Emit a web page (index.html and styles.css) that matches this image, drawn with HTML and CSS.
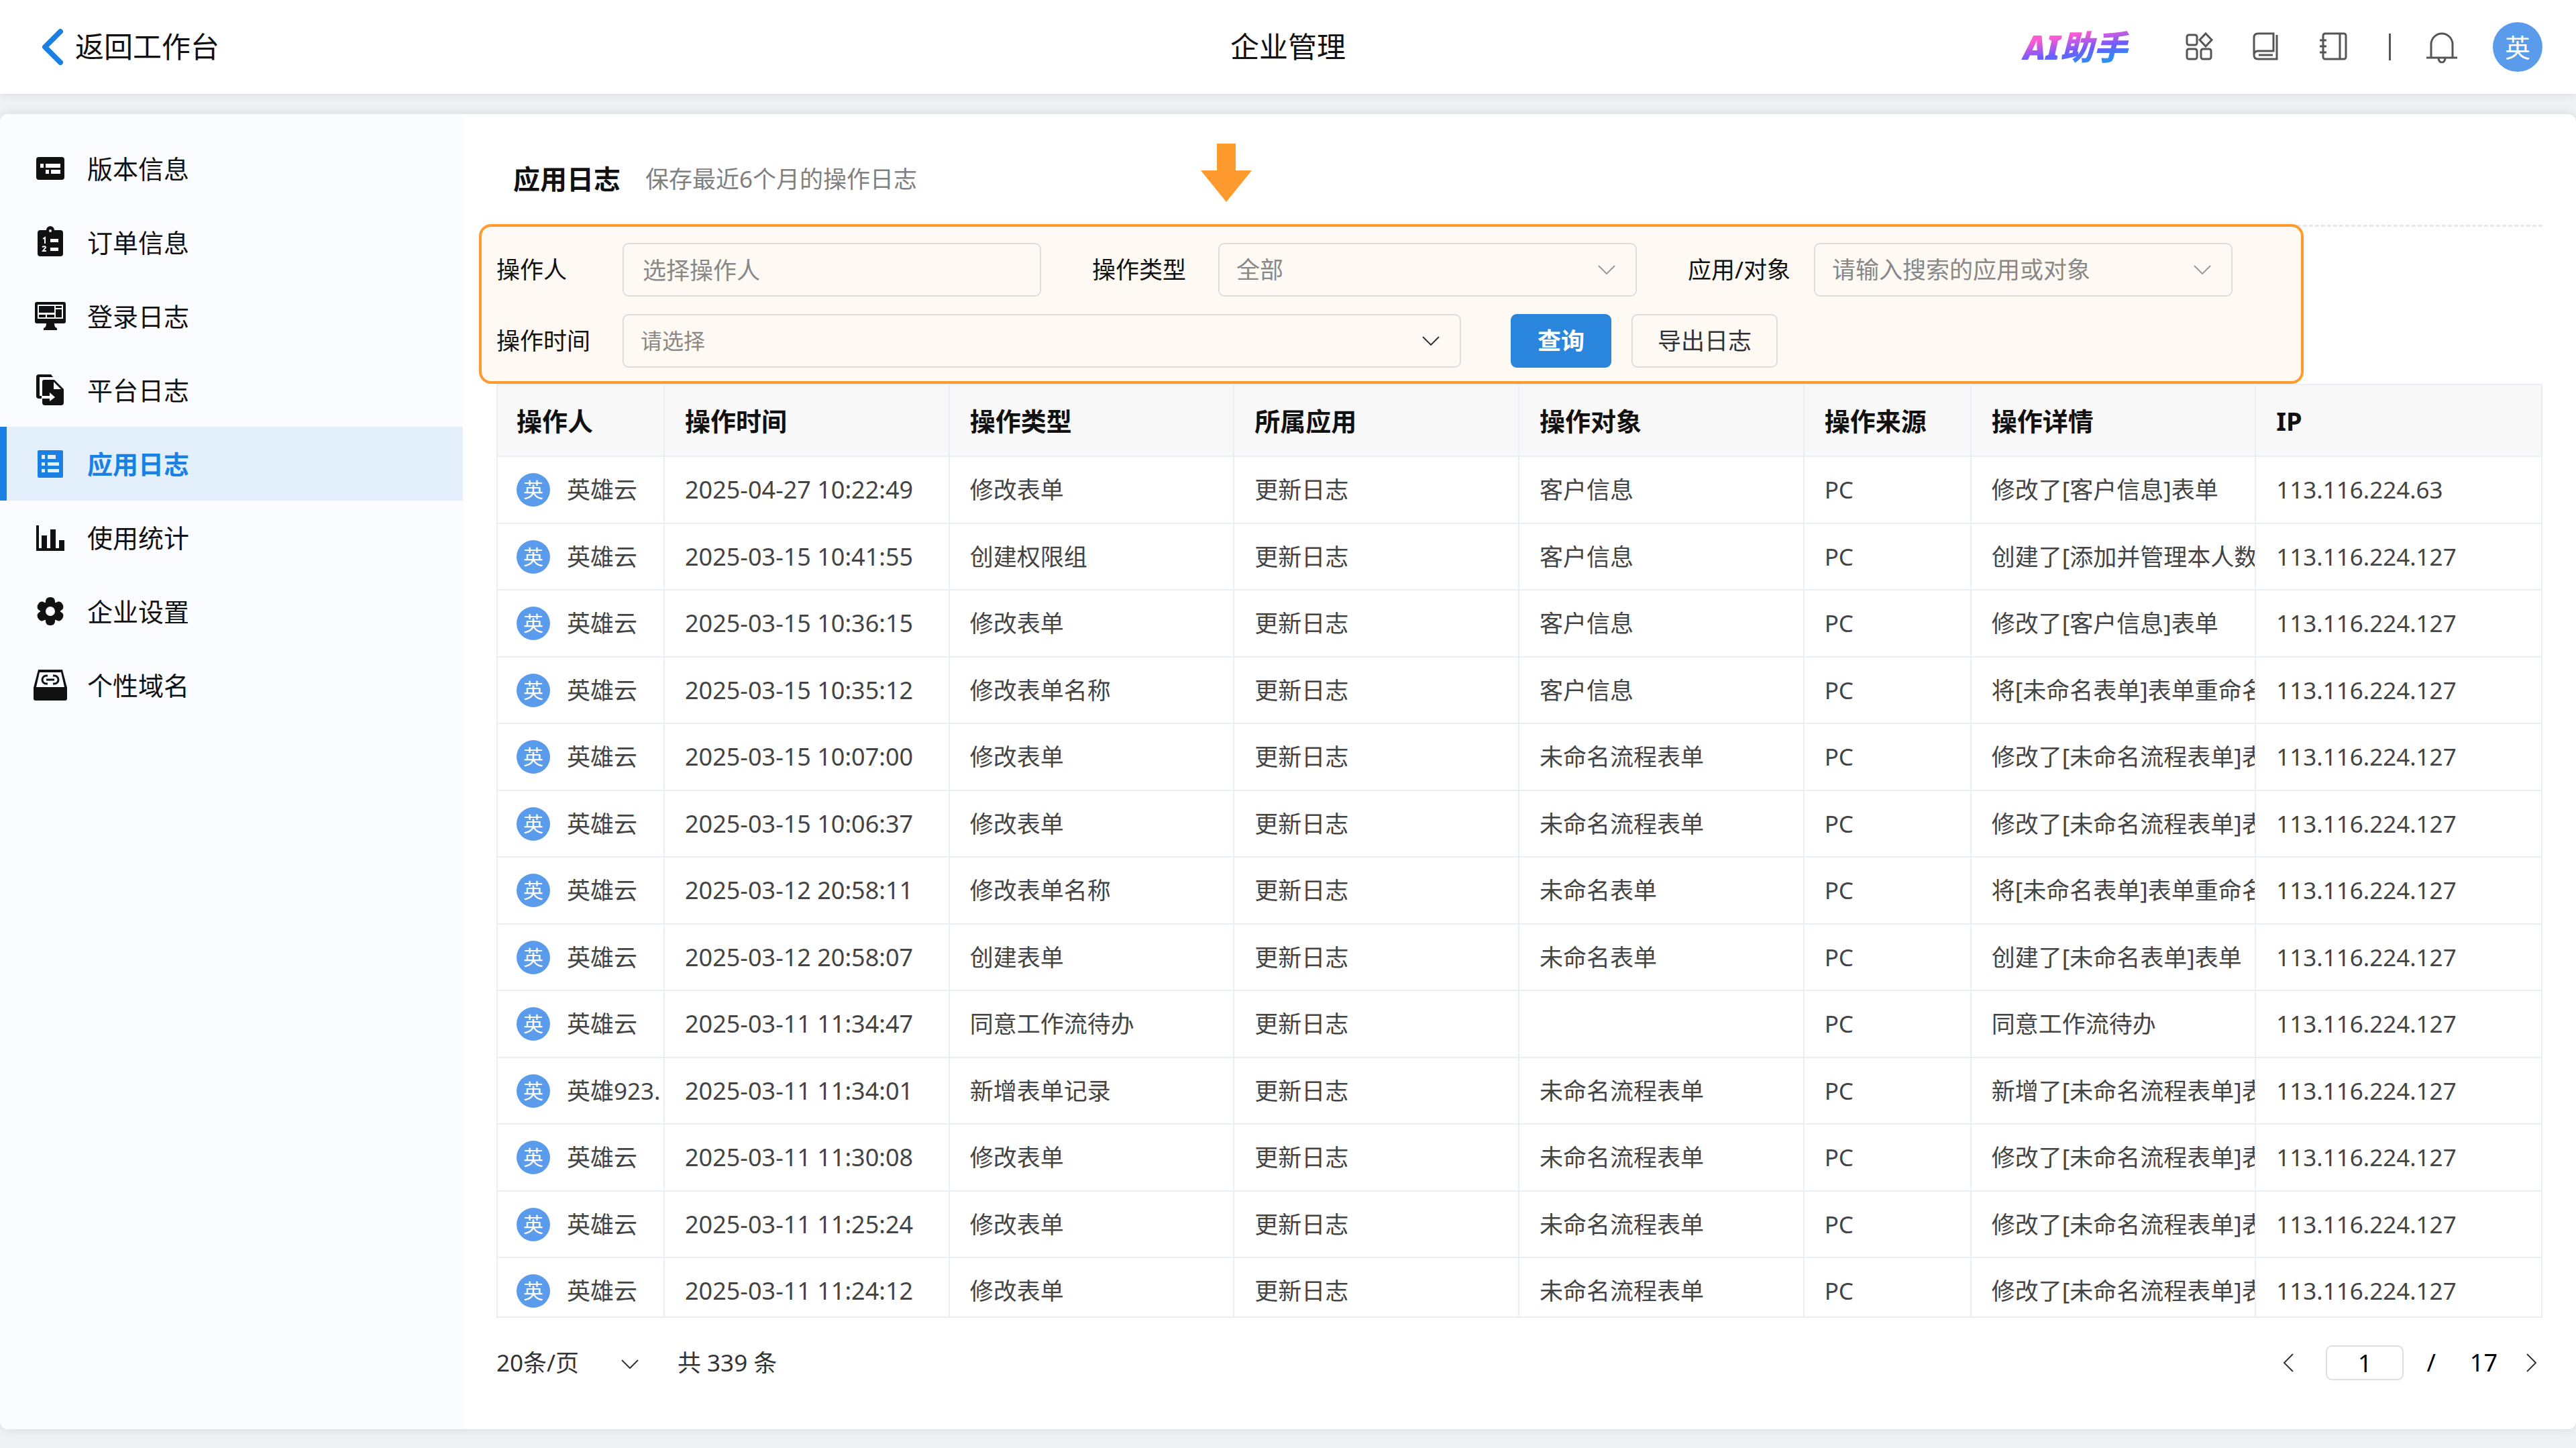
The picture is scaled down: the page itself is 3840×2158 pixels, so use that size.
FILE: index.html
```html
<!DOCTYPE html>
<html lang="zh-CN">
<head>
    <meta charset="UTF-8">
    <meta name="viewport" content="width=device-width, initial-scale=1.0">
    <title>企业管理 - 应用日志</title>
    <link rel="stylesheet" href="styles.css">
</head>
<body>

    <!-- 顶部导航 -->
    <header class="topbar">
        <a href="#" class="back">
            <svg width="32" height="54" viewBox="0 0 32 54"><path d="M28 4L5 27l23 23" fill="none" stroke="#1b80e4" stroke-width="8" stroke-linecap="round" stroke-linejoin="round"/></svg>
            返回工作台
        </a>
        <h1>企业管理</h1>
        <div class="tools">
            <a href="#" class="ai">AI助手</a>
            <button type="button" class="icon-btn" aria-label="应用">
                <svg viewBox="0 0 48 48"><rect x="5" y="6" width="15" height="15" rx="3"/><path d="M33 4l9 9.500-9 9.500-9-9.500z"/><rect x="5" y="27" width="15" height="15" rx="3"/><rect x="26" y="27" width="15" height="15" rx="3"/></svg>
            </button>
            <button type="button" class="icon-btn" aria-label="文档">
                <svg viewBox="0 0 48 48"><path d="M5 37V10q0-6 6-6h23v26H11q-6 0-6 6t6 6h28V6"/><path d="M12 36h21"/></svg>
            </button>
            <button type="button" class="icon-btn last" aria-label="通讯录">
                <svg viewBox="0 0 48 48"><rect x="8" y="4" width="34" height="38" rx="3"/><path d="M33 4v38M3 14h10M3 23h10M3 32h10"/></svg>
            </button>
            <span class="divider"></span>
            <button type="button" class="icon-btn" aria-label="消息">
                <svg viewBox="0 0 48 48"><path d="M1 40h46M8 40V20a16 16 0 0 1 32 0v20M19 41q1 6 5 6t5-6"/></svg>
            </button>
            <span class="avatar avatar-lg">英</span>
        </div>
    </header>

    <div class="panel">
        <!-- 左侧菜单 -->
        <nav class="sidebar">
            <a href="#">
                <svg viewBox="0 0 50 50"><rect x="4" y="8" width="42" height="34" rx="4"/><path class="cut" d="M10 18h5v6h-5zM18 18h22v6H18zM18 27h5v6h-5zM26 27h14v6H26z"/></svg>
                版本信息
            </a>
            <a href="#">
                <svg viewBox="0 0 50 50"><path d="M10 7h9a6 6 0 0 1 12 0h9q4 0 4 4v31q0 4-4 4H10q-4 0-4-4V11q0-4 4-4z"/><circle class="cut" cx="25" cy="8" r="2"/><path class="cut" d="M25 20h12v5H25zM25 33h12v5H25z"/><path class="cut-line" d="M14 20l3-2v9M13 32q5-2 5 1l-4 5h5"/></svg>
                订单信息
            </a>
            <a href="#">
                <svg viewBox="0 0 50 50"><path d="M5 4h40q3 0 3 3v26q0 3-3 3H31q0 6 4 7v3H15v-3q4-1 4-7H5q-3 0-3-3V7q0-3 3-3z"/><path class="cut" d="M6 8h38v21H6z"/><path d="M8 10h23v10H8zM33 10h9v3h-9zM33 15h9v12h-9zM8 23h10v4H8zM20 23h11v4H20z"/></svg>
                登录日志
            </a>
            <a href="#">
                <svg viewBox="0 0 50 50"><path d="M8 2h18l3 4H9v28h4v4H8q-4 0-4-4V6q0-4 4-4z"/><path d="M16 10h15l14 14v20q0 4-4 4H17q-4 0-4-4V13q0-3 3-3z"/><path class="cut" d="M30 13v11h11zM12 34h12v-5l8 7-8 6v-4H12z"/></svg>
                平台日志
            </a>
            <a href="#" class="active">
                <svg viewBox="0 0 50 50"><rect x="6" y="5" width="38" height="41" rx="2"/><path class="cut" d="M12 12h5v6h-5zM21 12h12v6H21zM12 23h5v5h-5zM21 23h17v5H21zM12 33h5v5h-5zM21 33h17v5H21z"/></svg>
                应用日志
            </a>
            <a href="#">
                <svg viewBox="0 0 50 50"><path d="M4 7h4v34h4V22h8v19h5V13h8v28h5V29h8v16H4z"/></svg>
                使用统计
            </a>
            <a href="#">
                <svg viewBox="0 0 50 50"><circle cx="25" cy="25" r="15"/><rect x="18" y="4" width="14" height="42" rx="6"/><rect x="18" y="4" width="14" height="42" rx="6" transform="rotate(60 25 25)"/><rect x="18" y="4" width="14" height="42" rx="6" transform="rotate(120 25 25)"/><circle class="cut" cx="25" cy="25" r="7"/></svg>
                企业设置
            </a>
            <a href="#">
                <svg viewBox="0 0 50 50"><path d="M7 2h36l7 27v16q0 3-3 3H3q-3 0-3-3V29z"/><path class="cut" d="M9 6h32l5 22H4z"/><path class="ring" d="M21 11h-2a6 6 0 0 0 0 12h2M29 11h2a6 6 0 0 1 0 12h-2M19 17h12"/></svg>
                个性域名
            </a>
        </nav>

        <main class="content">
            <div class="page-head">
                <h2>应用日志</h2>
                <p>保存最近6个月的操作日志</p>
                <svg class="arrow" width="76" height="87" viewBox="0 0 76 87"><path d="M24 0h28v40h24L38 87 0 40h24z" fill="#ff9a2e"/></svg>
            </div>

            <!-- 筛选条件 -->
            <form class="filter">
                <div class="field">
                    <label for="operator">操作人</label>
                    <input type="text" id="operator" placeholder="选择操作人">
                </div>
                <div class="field">
                    <label for="op-type">操作类型</label>
                    <div class="select">
                        <select id="op-type"><option>全部</option></select>
                        <svg viewBox="0 0 26 14"><path d="M1 1l12 12L25 1"/></svg>
                    </div>
                </div>
                <div class="field">
                    <label for="op-app">应用/对象</label>
                    <div class="select">
                        <select id="op-app"><option>请输入搜索的应用或对象</option></select>
                        <svg viewBox="0 0 26 14"><path d="M1 1l12 12L25 1"/></svg>
                    </div>
                </div>
                <div class="filter-row">
                    <div class="field time">
                        <label for="op-time">操作时间</label>
                        <div class="select dark">
                            <select id="op-time"><option>请选择</option></select>
                            <svg viewBox="0 0 26 14"><path d="M1 1l12 12L25 1"/></svg>
                        </div>
                    </div>
                    <button type="button" class="btn primary">查询</button>
                    <button type="button" class="btn">导出日志</button>
                </div>
            </form>

            <!-- 日志列表 -->
            <div class="table-wrap">
                <table>
                    <thead>
                        <tr><th class="narrow">操作人</th><th>操作时间</th><th>操作类型</th><th>所属应用</th><th>操作对象</th><th class="narrow">操作来源</th><th>操作详情</th><th>IP</th></tr>
                    </thead>
                    <tbody>
                        <tr><td><div class="user"><span class="avatar">英</span>英雄云</div></td><td class="date">2025-04-27 10:22:49</td><td>修改表单</td><td>更新日志</td><td>客户信息</td><td>PC</td><td>修改了[客户信息]表单</td><td>113.116.224.63</td></tr>
                        <tr><td><div class="user"><span class="avatar">英</span>英雄云</div></td><td class="date">2025-03-15 10:41:55</td><td>创建权限组</td><td>更新日志</td><td>客户信息</td><td>PC</td><td>创建了[添加并管理本人数据]</td><td>113.116.224.127</td></tr>
                        <tr><td><div class="user"><span class="avatar">英</span>英雄云</div></td><td class="date">2025-03-15 10:36:15</td><td>修改表单</td><td>更新日志</td><td>客户信息</td><td>PC</td><td>修改了[客户信息]表单</td><td>113.116.224.127</td></tr>
                        <tr><td><div class="user"><span class="avatar">英</span>英雄云</div></td><td class="date">2025-03-15 10:35:12</td><td>修改表单名称</td><td>更新日志</td><td>客户信息</td><td>PC</td><td>将[未命名表单]表单重命名为</td><td>113.116.224.127</td></tr>
                        <tr><td><div class="user"><span class="avatar">英</span>英雄云</div></td><td class="date">2025-03-15 10:07:00</td><td>修改表单</td><td>更新日志</td><td>未命名流程表单</td><td>PC</td><td>修改了[未命名流程表单]表单</td><td>113.116.224.127</td></tr>
                        <tr><td><div class="user"><span class="avatar">英</span>英雄云</div></td><td class="date">2025-03-15 10:06:37</td><td>修改表单</td><td>更新日志</td><td>未命名流程表单</td><td>PC</td><td>修改了[未命名流程表单]表单</td><td>113.116.224.127</td></tr>
                        <tr><td><div class="user"><span class="avatar">英</span>英雄云</div></td><td class="date">2025-03-12 20:58:11</td><td>修改表单名称</td><td>更新日志</td><td>未命名表单</td><td>PC</td><td>将[未命名表单]表单重命名为</td><td>113.116.224.127</td></tr>
                        <tr><td><div class="user"><span class="avatar">英</span>英雄云</div></td><td class="date">2025-03-12 20:58:07</td><td>创建表单</td><td>更新日志</td><td>未命名表单</td><td>PC</td><td>创建了[未命名表单]表单</td><td>113.116.224.127</td></tr>
                        <tr><td><div class="user"><span class="avatar">英</span>英雄云</div></td><td class="date">2025-03-11 11:34:47</td><td>同意工作流待办</td><td>更新日志</td><td></td><td>PC</td><td>同意工作流待办</td><td>113.116.224.127</td></tr>
                        <tr><td><div class="user"><span class="avatar">英</span>英雄923.</div></td><td class="date">2025-03-11 11:34:01</td><td>新增表单记录</td><td>更新日志</td><td>未命名流程表单</td><td>PC</td><td>新增了[未命名流程表单]表单</td><td>113.116.224.127</td></tr>
                        <tr><td><div class="user"><span class="avatar">英</span>英雄云</div></td><td class="date">2025-03-11 11:30:08</td><td>修改表单</td><td>更新日志</td><td>未命名流程表单</td><td>PC</td><td>修改了[未命名流程表单]表单</td><td>113.116.224.127</td></tr>
                        <tr><td><div class="user"><span class="avatar">英</span>英雄云</div></td><td class="date">2025-03-11 11:25:24</td><td>修改表单</td><td>更新日志</td><td>未命名流程表单</td><td>PC</td><td>修改了[未命名流程表单]表单</td><td>113.116.224.127</td></tr>
                        <tr><td><div class="user"><span class="avatar">英</span>英雄云</div></td><td class="date">2025-03-11 11:24:12</td><td>修改表单</td><td>更新日志</td><td>未命名流程表单</td><td>PC</td><td>修改了[未命名流程表单]表单</td><td>113.116.224.127</td></tr>
                    </tbody>
                </table>
            </div>

            <!-- 分页 -->
            <footer class="pager">
                <div class="select page-size">
                    <select aria-label="每页条数"><option>20条/页</option></select>
                    <svg viewBox="0 0 26 14"><path d="M1 1l12 12L25 1"/></svg>
                </div>
                <span>共 339 条</span>
                <div class="pages">
                    <button type="button" class="turn" aria-label="上一页"><svg viewBox="0 0 16 28"><path d="M15 1L2 14l13 13"/></svg></button>
                    <input type="text" value="1" aria-label="页码">
                    <span>/</span>
                    <span>17</span>
                    <button type="button" class="turn" aria-label="下一页"><svg viewBox="0 0 16 28"><path d="M1 1l13 13L1 27"/></svg></button>
                </div>
            </footer>
        </main>
    </div>

</body>
</html>
```
FILE: styles.css
```css
* {
    box-sizing: border-box;
}
body {
    margin: 0;
    height: 100vh;
    display: flex;
    flex-direction: column;
    background: #f0f1f4;
    color: #111;
    font-family: "Noto Sans", "Noto Sans CJK SC", sans-serif;
    font-size: 35px;
    line-height: 50px;
}
h1, h2, p {
    margin: 0;
}
a {
    color: inherit;
    text-decoration: none;
}
input, select, button {
    font: inherit;
    color: inherit;
    background: none;
    border: none;
    padding: 0;
    margin: 0;
    outline: none;
}
button {
    cursor: pointer;
}

/* 顶部导航 */
.topbar {
    height: 140px;
    flex: none;
    display: grid;
    grid-template-columns: 1fr auto 1fr;
    align-items: center;
    padding: 0 50px;
    background: white;
    box-shadow: 0 2px 12px rgba(0, 0, 0, 0.08);
}
.back {
    display: flex;
    align-items: center;
    gap: 18px;
    padding-left: 12px;
    font-size: 43px;
}
h1 {
    font-size: 43px;
    font-weight: normal;
}
.tools {
    display: flex;
    justify-content: flex-end;
    align-items: center;
}
.ai {
    margin-right: 78px;
    padding: 0 6px;
    font-size: 50px;
    font-weight: 900;
    font-style: italic;
    background: linear-gradient(170deg, #ff5ad2 25%, #6d5cff 58%, #2a90f2 85%);
    -webkit-background-clip: text;
    background-clip: text;
    color: transparent;
}
.icon-btn {
    display: flex;
    margin-right: 52px;
}
.icon-btn.last {
    margin-right: 58px;
}
.icon-btn svg {
    width: 48px;
    height: 48px;
    fill: none;
    stroke: #555;
    stroke-width: 3;
}
.divider {
    width: 3px;
    height: 40px;
    margin-right: 52px;
    background: #555;
}
.avatar {
    width: 50px;
    height: 50px;
    flex: none;
    border-radius: 50%;
    background: #5b9bec;
    color: white;
    font-size: 30px;
    line-height: 50px;
    text-align: center;
}
.avatar-lg {
    width: 74px;
    height: 74px;
    font-size: 38px;
    line-height: 74px;
}

.panel {
    flex: 1;
    min-height: 0;
    display: flex;
    margin: 30px 0 28px;
    border-radius: 12px;
    background: white;
    box-shadow: 0 0 16px rgba(0, 0, 0, 0.1);
    overflow: hidden;
}

/* 左侧菜单 */
.sidebar {
    width: 690px;
    flex: none;
    padding-top: 26px;
    background: #fbfcff;
}
.sidebar a {
    height: 110px;
    display: flex;
    align-items: center;
    gap: 30px;
    padding-left: 40px;
    border-left: 10px solid transparent;
    font-size: 38px;
}
.sidebar svg {
    width: 50px;
    height: 50px;
    fill: #111;
}
.sidebar svg .cut {
    fill: #fbfcff;
}
.cut-line, .ring {
    fill: none;
    stroke: #fbfcff;
    stroke-width: 2;
}
.ring {
    stroke: #111;
    stroke-width: 3;
}
.sidebar .active {
    background: #e3effb;
    border-color: #1b80e4;
    color: #1b80e4;
    font-weight: bold;
}
.sidebar .active svg {
    fill: #1b80e4;
}
.sidebar .active .cut {
    fill: #e3effb;
}

.content {
    flex: 1;
    min-width: 0;
    display: flex;
    flex-direction: column;
    padding: 0 50px;
}
.page-head {
    position: relative;
    height: 168px;
    flex: none;
    display: flex;
    align-items: center;
    gap: 37px;
    padding: 28px 26px 0 25px;
    border-bottom: 3px dashed #e8e8e8;
}
h2 {
    font-size: 40px;
}
.page-head p {
    color: #808080;
}
.arrow {
    position: absolute;
    left: 1050px;
    top: 44px;
}

/* 筛选条件 */
.filter {
    position: relative;
    display: grid;
    grid-template-columns: repeat(3, 1fr);
    gap: 26px 76px;
    margin: -4px 356px 0 -26px;
    padding: 24px 102px 20px 22px;
    border: 4px solid #ff9a2e;
    border-radius: 18px;
    background: #fef9f2;
}
.field {
    display: flex;
    align-items: center;
}
.field label {
    width: 188px;
    flex: none;
}
.field input, .field select {
    width: 100%;
    height: 80px;
    padding: 0 28px;
    border: 2px solid #e0dcd8;
    border-radius: 9px;
    color: #888;
}
.field select {
    padding: 0 25px;
}
.field input {
    min-width: 0;
}
.field input::placeholder {
    color: #888;
}
.select {
    position: relative;
    flex: 1;
}
.select select {
    appearance: none;
}
.select svg {
    position: absolute;
    right: 32px;
    top: 33px;
    width: 26px;
    height: 14px;
    fill: none;
    stroke: #999;
    stroke-width: 2;
    pointer-events: none;
}
.select.dark svg {
    stroke: #333;
}
.select.dark select {
    font-size: 32px;
}
.filter-row {
    grid-column: 1 / -1;
    display: flex;
    gap: 30px;
}
.time {
    width: 1438px;
    margin-right: 44px;
}
.btn {
    height: 80px;
    padding: 0 37px;
    border: 2px solid #e0dcd8;
    border-radius: 9px;
    color: #333;
}
.btn.primary {
    padding: 0 38px;
    background: #2a85dc;
    border-color: #2a85dc;
    color: white;
    font-weight: bold;
}

/* 日志列表 */
.table-wrap {
    flex: 1;
    min-height: 0;
    overflow: hidden;
    border: 2px solid #ebeef5;
}
table {
    width: 100%;
    table-layout: fixed;
    border-collapse: separate;
    border-spacing: 0;
}
th, td {
    padding: 0 0 0 30px;
    border-right: 2px solid #ebeef5;
    border-bottom: 2px solid #ebeef5;
    text-align: left;
    white-space: nowrap;
    overflow: hidden;
}
th:first-child, td:first-child {
    padding-left: 28px;
}
th:last-child, td:last-child {
    border-right: none;
}
th {
    height: 107px;
    background: #f8f8f8;
    font-size: 38px;
}
th.narrow {
    width: 249px;
}
td {
    height: 99px;
    color: #444;
}
tr:nth-child(odd) td {
    height: 100px;
}
td.date {
    font-size: 36px;
}
.user {
    display: flex;
    align-items: center;
    gap: 25px;
}

/* 分页 */
.pager {
    height: 166px;
    flex: none;
    display: flex;
    align-items: center;
    padding-bottom: 32px;
    color: #333;
}
.page-size {
    width: 212px;
    flex: none;
    margin-right: 58px;
}
.page-size select {
    width: 100%;
}
.page-size svg {
    right: 0;
    top: 20px;
    stroke: #333;
}
.pages {
    display: flex;
    align-items: center;
    margin-left: auto;
    color: #000;
    font-size: 36px;
}
.pages input {
    width: 116px;
    height: 52px;
    margin: 0 34px 0 48px;
    border: 2px solid #dcdfe6;
    border-radius: 9px;
    text-align: center;
}
.pages span {
    margin-right: 51px;
}
.turn {
    display: flex;
}
.turn:last-child {
    margin: 0 8px 0 -8px;
}
.turn svg {
    width: 16px;
    height: 28px;
    fill: none;
    stroke: #333;
    stroke-width: 2;
}
```
